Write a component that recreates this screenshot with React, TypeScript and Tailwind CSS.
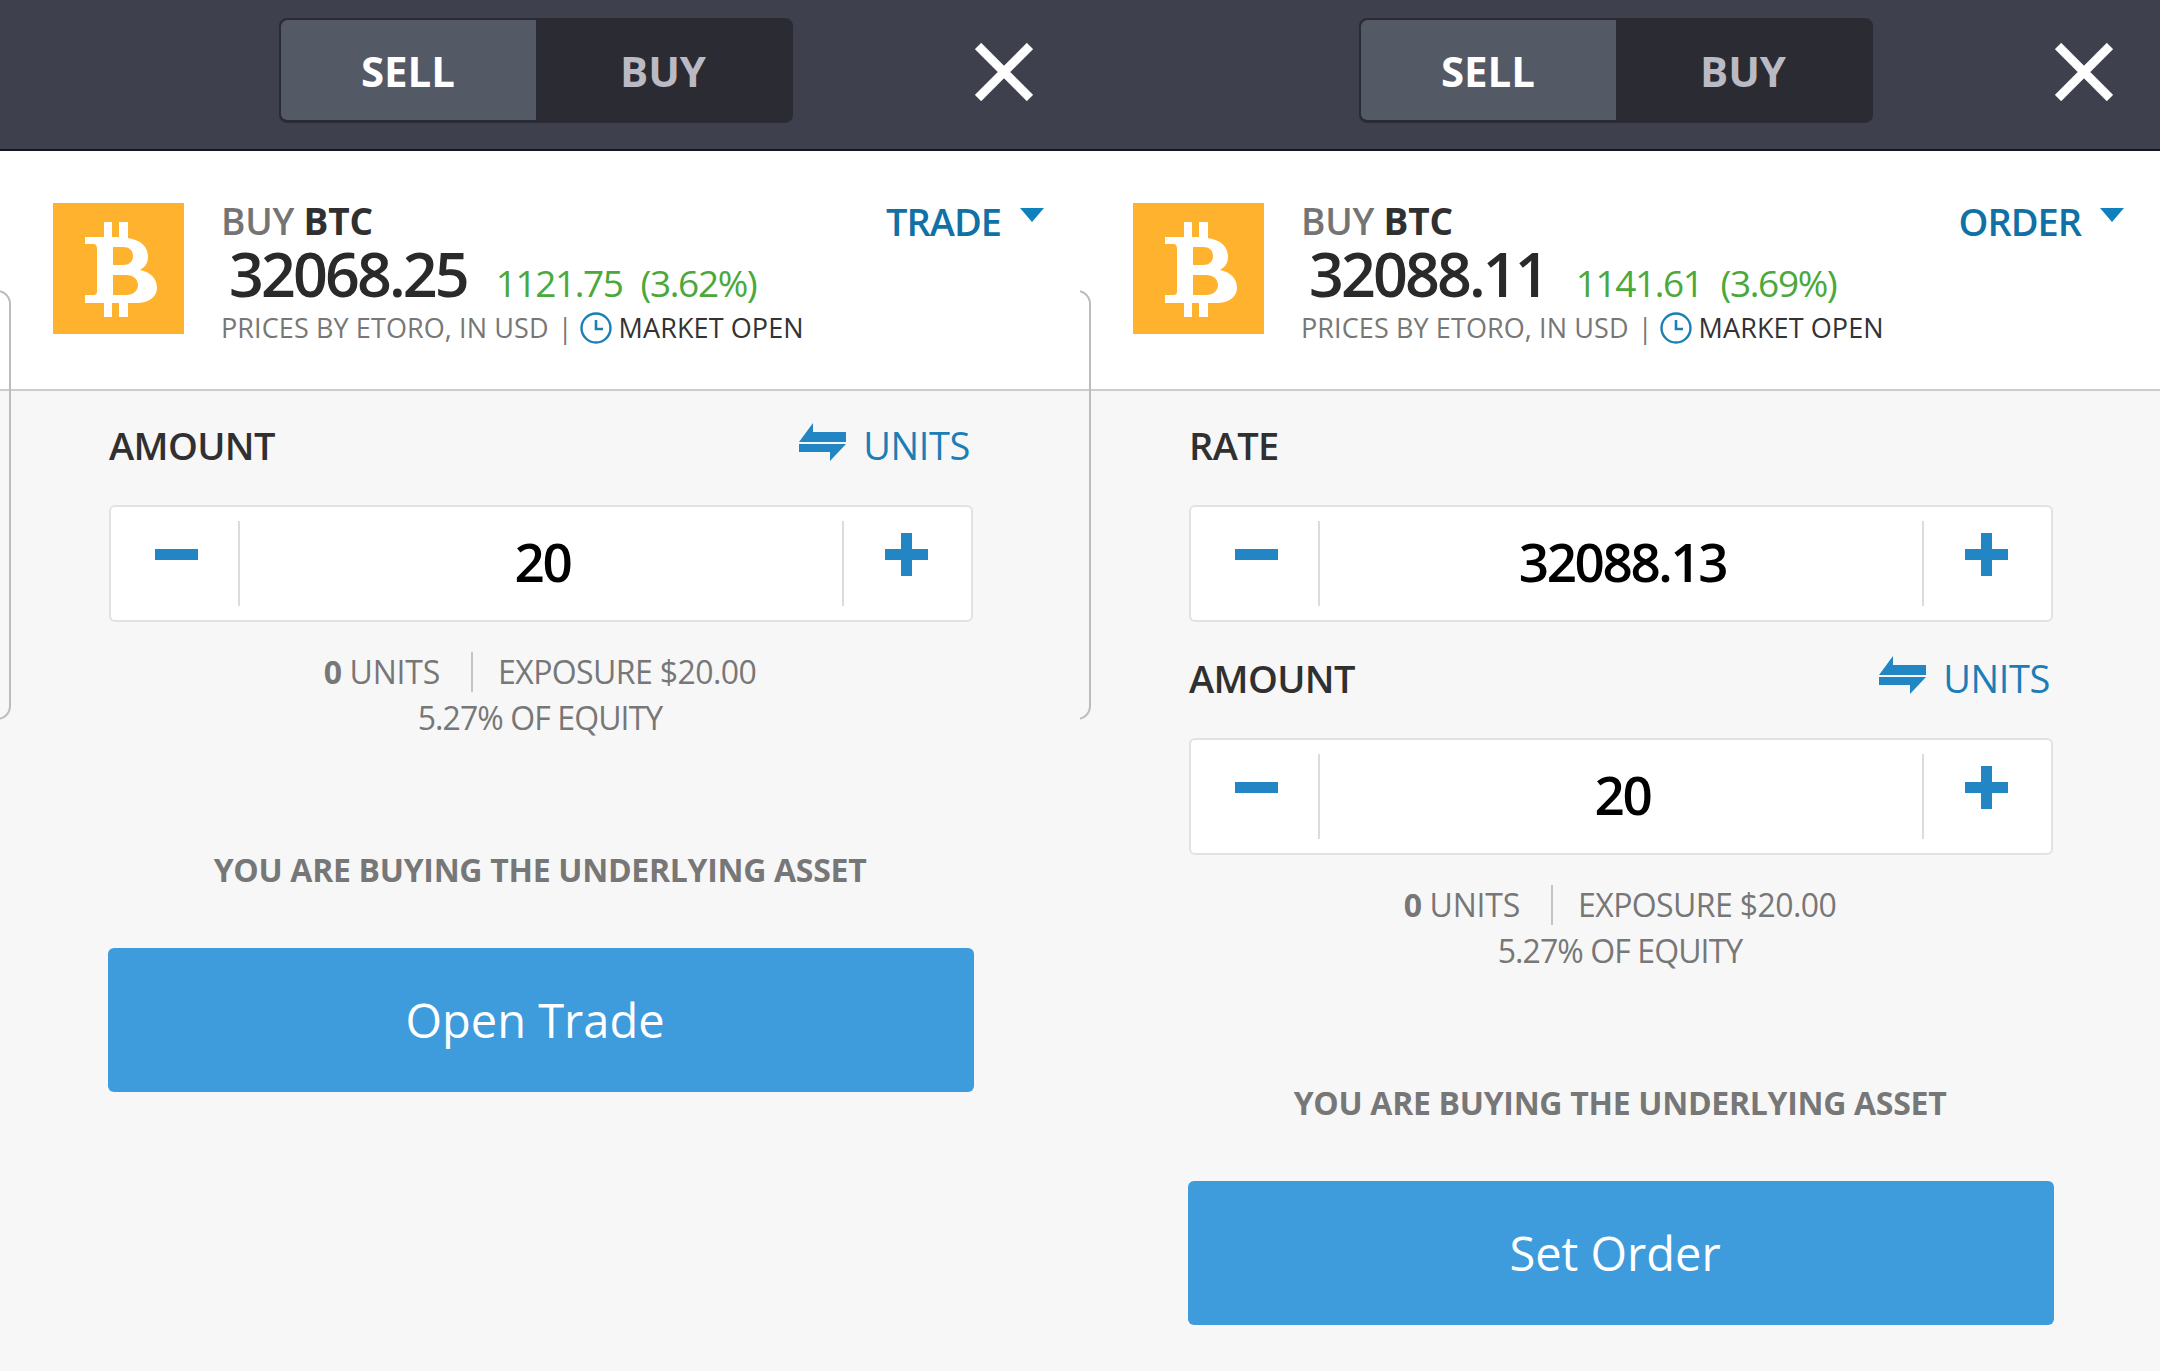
const BitcoinLogo = () => (
  <svg viewBox="0 0 131 131" className="h-[131px] w-[131px] shrink-0">
    <rect width="131" height="131" fill="#ffb22e" />
    <path
      fill="#fff"
      fillRule="evenodd"
      d="M51 19h8v15h7V19h9v16c12 2 20 8 20 19 0 6-3 10-8 13 10 2 17 8 17 18 0 9-9 15-20 15h-9v14h-9v-14h-7v14h-8v-14H32v-8h8c3 0 4-1 4-4V46c0-3-1-5-4-5h-8v-7h19zM60 44v18h10c6 0 10-3 10-9s-4-9-10-9zM60 72v20h13c7 0 12-4 12-10s-5-10-12-10z"
    />
  </svg>
);

const ClockIcon = () => (
  <svg viewBox="0 0 32 32" className="mx-[7px] h-[32px] w-[32px] shrink-0" fill="none" stroke="#1a7fb5">
    <circle cx="16" cy="16" r="14.5" strokeWidth="2.4" />
    <path d="M16 8v9h7" strokeWidth="2.6" />
  </svg>
);

const SwapIcon = () => (
  <svg viewBox="0 0 47 38" className="mt-[-6px] h-[38px] w-[47px] shrink-0" fill="#2286c4">
    <path d="M14 0v9h33v10H0zM0 21h47L31 38v-9H0z" />
  </svg>
);

const Stepper = ({ value }: { value: string }) => (
  <div className="flex h-[117px] items-stretch rounded-[6px] border-2 border-[#e2e2e2] bg-white">
    <div className="flex w-[127px] items-start justify-center pl-[3px] pt-[42px]">
      <div className="h-[11px] w-[43px] bg-[#2286c4]" />
    </div>
    <div className="my-[14px] flex flex-1 items-center justify-center border-x-2 border-[#dcdcdc] pb-[4px] pl-[3px] text-[53px] font-semibold leading-none tracking-[-2.4px] text-black">
      {value}
    </div>
    <div className="flex w-[127px] items-start justify-center pr-[2px] pt-[26px]">
      <div className="relative h-[43px] w-[43px]">
        <div className="absolute left-0 top-[16px] h-[11px] w-[43px] bg-[#2286c4]" />
        <div className="absolute left-[16px] top-0 h-[43px] w-[11px] bg-[#2286c4]" />
      </div>
    </div>
  </div>
);

const Field = ({ label, value, units }: { label: string; value: string; units?: boolean }) => (
  <div>
    <div className="flex h-[76px] items-center justify-between pb-[2px]">
      <span className="text-[38px] font-semibold tracking-[-0.6px] text-[#303030]">{label}</span>
      {units && (
        <div className="flex items-center gap-[17px] pr-[3px] text-[38px] font-medium tracking-[-0.4px] text-[#1c7eb6]">
          <SwapIcon />
          <span>UNITS</span>
        </div>
      )}
    </div>
    <div className="mt-[21px]">
      <Stepper value={value} />
    </div>
  </div>
);

type PanelProps = {
  mode: string;
  price: string;
  change: string;
  percent: string;
  action: string;
  rate?: string;
};

const Panel = ({ mode, price, change, percent, action, rate }: PanelProps) => (
  <div className="relative h-[1371px] w-[1080px] overflow-hidden bg-[#f7f7f7]" style={{ fontFamily: '"Open Sans", sans-serif' }}>
    {/* top bar */}
    <div className="relative flex h-[151px] items-start justify-center border-b-2 border-[#15171c] bg-[#3e414d]">
      <div className="ml-[-9px] mt-[18px] flex h-[105px] w-[514px] overflow-hidden rounded-[8px] border-2 border-b-[3px] border-[#2b2c33] bg-[#2b2c33] text-[42px] font-bold">
        <div className="flex w-[255px] items-center justify-center rounded-l-[6px] bg-[#535965] text-white">SELL</div>
        <div className="flex flex-1 items-center justify-center text-[#b9bac4]">BUY</div>
      </div>
      <svg viewBox="0 0 58 58" className="absolute left-[975px] top-[43px] h-[58px] w-[58px]" stroke="#fff" strokeWidth="9">
        <path d="M3 3l52 52M55 3L3 55" />
      </svg>
    </div>

    {/* instrument header */}
    <div className="relative flex h-[240px] items-start border-b-2 border-[#cccccc] bg-white pl-[53px] pt-[52px]">
      <BitcoinLogo />
      <div className="ml-[37px] mt-[-4px]">
        <div className="h-[44px] text-[37px] font-bold leading-[44px] tracking-[-0.2px] text-[#303030]">
          <span className="font-semibold text-[#747474]">BUY</span> BTC
        </div>
        <div className="ml-[8px] flex h-[62px] items-baseline leading-[62px]">
          <span className="text-[61px] font-semibold tracking-[-2.9px] text-[#2a2a2a]">{price}</span>
          <span className="ml-[29px] text-[37px] tracking-[-1.4px] text-[#4ba83a]">
            {change}
            <span className="ml-[18px]">({percent})</span>
          </span>
        </div>
        <div className="mt-[5px] flex h-[36px] items-center text-[27px] leading-[36px] tracking-[0.1px] text-[#777777]">
          <span>PRICES BY ETORO, IN USD</span>
          <span className="ml-[9px]">|</span>
          <ClockIcon />
          <span className="text-[#333333]">MARKET OPEN</span>
        </div>
      </div>
      <div className="absolute right-[36px] top-[50px] flex items-start gap-[19px] text-[38px] font-semibold leading-[40px] tracking-[-1px] text-[#1071a6]">
        <span>{rate ? "ORDER" : "TRADE"}</span>
        <div className="mt-[7px] h-0 w-0 border-x-[12px] border-t-[14px] border-x-transparent border-t-[#0f81bd]" />
      </div>
    </div>

    {/* form */}
    <div className="ml-[109px] mr-[107px] flex flex-col gap-[19px] pt-[17px]">
      {rate && <Field label="RATE" value={rate} />}
      <Field label={mode} value="20" units />
    </div>
    <div className="mt-[27px] flex h-[46px] items-center justify-center text-[32px] tracking-[-0.6px] text-[#777777]">
      <span className="font-bold">0</span>
      <span className="ml-[8px] tracking-[-0.2px]">UNITS</span>
      <div className="ml-[31px] mr-[25px] h-[40px] w-[2px] bg-[#c4c4c4]" />
      <span>EXPOSURE $20.00</span>
    </div>
    <div className="flex h-[45px] items-center justify-center text-[32px] tracking-[-0.9px] text-[#777777]">5.27% OF EQUITY</div>
    <div className="mt-[110px] flex h-[40px] items-center justify-center text-[32px] font-bold tracking-[-0.3px] text-[#777777]">
      YOU ARE BUYING THE UNDERLYING ASSET
    </div>
    <div className="ml-[108px] mr-[106px] mt-[58px] flex h-[144px] items-center justify-center rounded-[6px] bg-[#3e9bdc] pr-[12px] text-[47px] text-white">
      {action}
    </div>

    {/* edge of the card behind the sheet */}
    <div className="absolute left-[-20px] top-[290px] h-[430px] w-[31px] rounded-[14px] border-2 border-[#bcbcbc]" />
  </div>
);

const App = () => (
  <div className="flex h-[1371px] w-[2160px] overflow-hidden">
    <Panel mode="AMOUNT" price="32068.25" change="1121.75" percent="3.62%" action="Open Trade" />
    <Panel mode="AMOUNT" price="32088.11" change="1141.61" percent="3.69%" action="Set Order" rate="32088.13" />
  </div>
);

export default App;
